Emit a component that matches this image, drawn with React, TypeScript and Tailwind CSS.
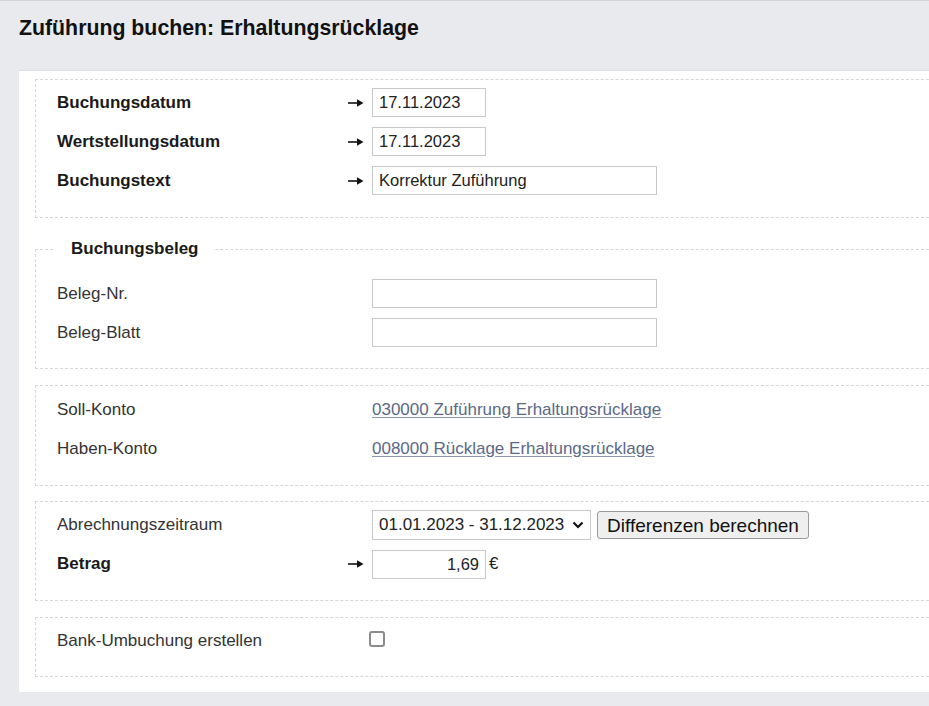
import React from 'react';

const font = { fontFamily: '"Liberation Sans", Arial, sans-serif' };

function Arrow() {
  return (
    <svg width="16" height="10" viewBox="0 0 16 10" className="shrink-0">
      <path d="M0 5h10" stroke="#111" strokeWidth="1.6" />
      <path d="M9 1.2L15.5 5 9 8.8z" fill="#111" />
    </svg>
  );
}

function Row({
  label,
  bold,
  arrow,
  h = 'h-[29px]',
  children,
}: {
  label: string;
  bold?: boolean;
  arrow?: boolean;
  h?: string;
  children?: React.ReactNode;
}) {
  return (
    <div className={`flex items-center ${h}`}>
      <div className={`w-[291px] shrink-0 ${bold ? 'font-bold text-[#1a1a1a]' : 'text-[#333]'}`}>{label}</div>
      <div className="w-[24px] shrink-0 flex items-center">{arrow && <Arrow />}</div>
      {children}
    </div>
  );
}

function TextBox({ value = '', w, right }: { value?: string; w: string; right?: boolean }) {
  return (
    <input
      readOnly
      value={value}
      className={`${w} h-[29px] border border-[#c9c9c9] bg-white px-[6px] text-[16.5px] text-[#222] outline-none ${right ? 'text-right' : ''}`}
      style={font}
    />
  );
}

export default function App() {
  return (
    <div className="min-h-[706px] w-[929px] overflow-hidden bg-[#e9eaee] border-t border-[#d3d5da] text-[17px]" style={font}>
      <h1 className="pl-[19px] pt-[12px] h-[69px] text-[21.3px] font-bold text-[#111]">Zuführung buchen: Erhaltungsrücklage</h1>
      <div className="ml-[19px] w-[960px] bg-white border-t border-[#dcdee3] pl-[16px] pt-[8px] pb-[15px]">
        <div className="border border-dashed border-[#d6d7db] pl-[21px] pt-[8px] pb-[22px] flex flex-col gap-[10px]">
          <Row label="Buchungsdatum" bold arrow>
            <TextBox value="17.11.2023" w="w-[114px]" />
          </Row>
          <Row label="Wertstellungsdatum" bold arrow>
            <TextBox value="17.11.2023" w="w-[114px]" />
          </Row>
          <Row label="Buchungstext" bold arrow>
            <TextBox value="Korrektur Zuführung" w="w-[285px]" />
          </Row>
        </div>

        <fieldset className="mt-[20px] border border-dashed border-[#d6d7db] pl-[21px] pb-[21px]">
          <legend className="ml-[-2px] px-[16px] leading-[22px] font-bold text-[#1a1a1a]">Buchungsbeleg</legend>
          <div className="pt-[19px] flex flex-col gap-[10px]">
            <Row label="Beleg-Nr.">
              <TextBox w="w-[285px]" />
            </Row>
            <Row label="Beleg-Blatt">
              <TextBox w="w-[285px]" />
            </Row>
          </div>
        </fieldset>

        <div className="mt-[16px] border border-dashed border-[#d6d7db] pl-[21px] pt-[9px] pb-[22px] flex flex-col gap-[10px]">
          <Row label="Soll-Konto">
            <a href="#" className="text-[#5b6987] underline underline-offset-2 decoration-[#8a94aa]">030000 Zuführung Erhaltungsrücklage</a>
          </Row>
          <Row label="Haben-Konto">
            <a href="#" className="text-[#5b6987] underline underline-offset-2 decoration-[#8a94aa]">008000 Rücklage Erhaltungsrücklage</a>
          </Row>
        </div>

        <div className="mt-[15px] border border-dashed border-[#d6d7db] pl-[21px] pt-[8px] pb-[21px] flex flex-col gap-[9px]">
          <Row label="Abrechnungszeitraum" h="h-[30px]">
            <div className="w-[219px] h-[30px] border border-[#c9c9c9] bg-white flex items-center justify-between pl-[6px] pr-[6px] text-[#222]">
              <span>01.01.2023 - 31.12.2023</span>
              <svg width="12" height="8" viewBox="0 0 12 8">
                <path d="M1.5 1.5L6 6l4.5-4.5" fill="none" stroke="#111" strokeWidth="2.2" />
              </svg>
            </div>
            <button className="ml-[6px] h-[28px] w-[212px] rounded-[3px] border border-[#9a9a9a] bg-[#efefef] text-[19px] text-[#111]" style={font}>
              Differenzen berechnen
            </button>
          </Row>
          <Row label="Betrag" bold arrow h="h-[30px]">
            <TextBox value="1,69" w="w-[114px]" right />
            <span className="ml-[3px] text-[#222]">€</span>
          </Row>
        </div>

        <div className="mt-[16px] border border-dashed border-[#d6d7db] pl-[21px] pt-[8px] pb-[21px]">
          <Row label="Bank-Umbuchung erstellen">
            <span className="ml-[-3px] mb-[4px] w-[16px] h-[16px] rounded-[3px] border-2 border-[#8c8c8c] bg-white" />
          </Row>
        </div>
      </div>
    </div>
  );
}
